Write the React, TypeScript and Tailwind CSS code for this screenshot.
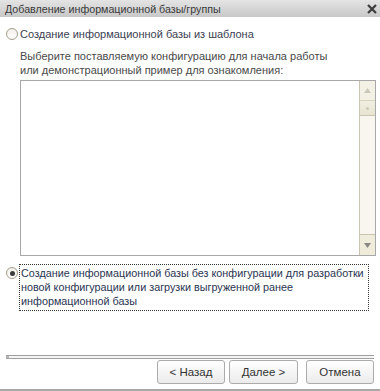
import React from "react";

function Radio({ checked }: { checked?: boolean }) {
  return (
    <span className="w-[12px] h-[12px] shrink-0 rounded-full border border-[#a39d8b] bg-gradient-to-b from-[#f2f0ea] to-white flex items-center justify-center">
      {checked && <span className="w-[5px] h-[5px] rounded-full bg-[#3b3b3b]" />}
    </span>
  );
}

function Btn({ label, className = "" }: { label: string; className?: string }) {
  return (
    <button className={`h-[24px] w-[68px] rounded-[3px] border border-[#ababab] bg-gradient-to-b from-white to-[#ebebeb] text-[11.5px] text-[#333] ${className}`}>
      {label}
    </button>
  );
}

export default function App() {
  return (
    <div
      className="w-[380px] h-[391px] bg-white flex flex-col text-[11px] leading-[14px] overflow-hidden"
      style={{ fontFamily: '"Liberation Sans", Arial, sans-serif' }}
    >
      {/* title bar */}
      <div className="h-[17px] shrink-0 bg-gradient-to-b from-[#e4e4e4] to-[#c8c8c8] flex items-center justify-between pl-[5px] pr-[3px]">
        <span className="text-[10.7px] text-[#3a3a3a]">Добавление информационной базы/группы</span>
        <svg width="10" height="10" viewBox="0 0 10 10">
          <path d="M1 1 L9 9 M9 1 L1 9" stroke="#3c3c3c" strokeWidth="2.2" />
        </svg>
      </div>

      <div className="flex-1 flex flex-col pl-[6px] pr-[4px]">
        <label className="mt-[10px] flex items-center gap-[2px] text-[#3b4152]">
          <Radio />
          <span>Создание информационной базы из шаблона</span>
        </label>

        <div className="pl-[14px] mt-[8px] text-[#4a4a4a]">
          Выберите поставляемую конфигурацию для начала работы<br />
          или демонстрационный пример для ознакомления:
        </div>

        <div className="ml-[14px] mt-[3px] h-[176px] border border-[#a8a8a8] flex">
          <div className="flex-1" />
          <div className="w-[16px] border-l border-[#c9c5b1] bg-[#f8f6ee] flex flex-col">
            <div className="h-[20px] flex items-center justify-center border-b border-[#d8d4c0] bg-[#f3f1e6]">
              <svg width="7" height="5" viewBox="0 0 7 5"><path d="M3.5 0 L7 5 L0 5 Z" fill="#cbc8ba" /></svg>
            </div>
            <div className="h-[15px] flex items-center justify-center border-b border-[#c9c5b1] bg-gradient-to-b from-[#f1efe1] to-[#e7e4d1]">
              <span className="w-[3px] h-[3px] rounded-full bg-[#cbc8ba]" />
            </div>
            <div className="flex-1" />
            <div className="h-[21px] flex items-center justify-center border-t border-[#c9c5b1] bg-[#efecdb]">
              <svg width="7" height="5" viewBox="0 0 7 5"><path d="M0 0 L7 0 L3.5 5 Z" fill="#8a8882" /></svg>
            </div>
          </div>
        </div>

        <label className="mt-[8px] flex items-start gap-[1px] text-[#2a3452]">
          <span className="mt-[3px]"><Radio checked /></span>
          <span className="border border-dotted border-[#333] pl-[1px] pt-[1px] pb-[2px] w-[350px] whitespace-nowrap text-[10.8px]">
            Создание информационной базы без конфигурации для разработки<br />
            новой конфигурации или загрузки выгруженной ранее<br />
            информационной базы
          </span>
        </label>

        <div className="flex-1" />

        <div className="mr-[2px] h-[4px] border-y border-[#a0a0a0] bg-[#f5f5f5] flex">
          <span className="w-[3px] bg-[#b5b5b5]" />
        </div>

        <div className="mt-[1px] mb-[5px] flex justify-end gap-[4px] pr-[2px]">
          <Btn label="< Назад" />
          <Btn label="Далее >" className="w-[69px]" />
          <Btn label="Отмена" className="ml-[4px] w-[67px]" />
        </div>
      </div>
      <div className="h-[2px] bg-[#a8a8a8]" />
    </div>
  );
}
